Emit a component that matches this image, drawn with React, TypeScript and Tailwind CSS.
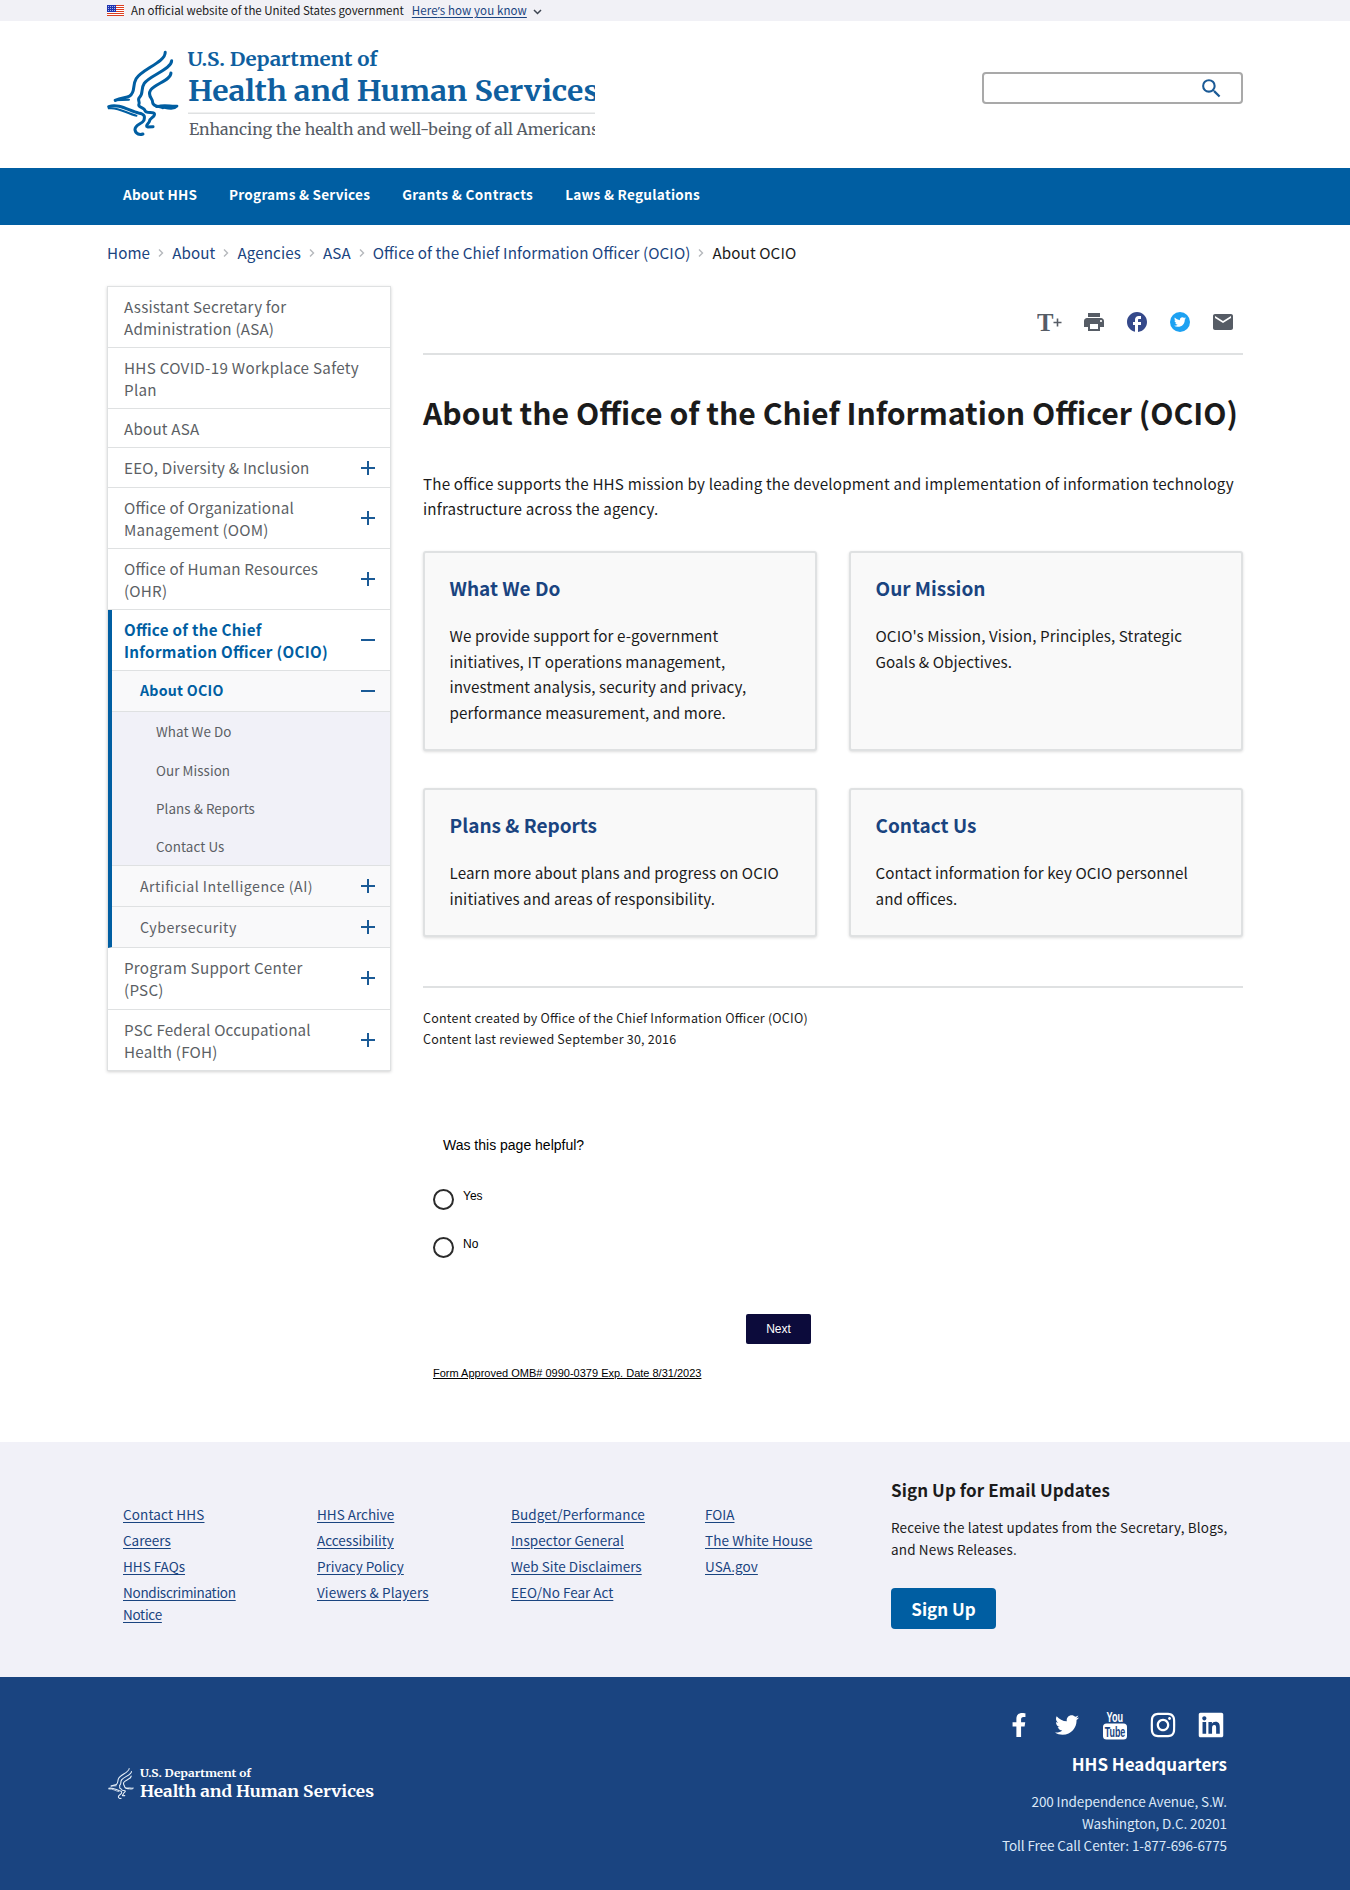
import type { ReactNode } from "react";
import { FaFacebookF, FaInstagram, FaLinkedin, FaTwitter } from "react-icons/fa";
import { MdEmail, MdFacebook, MdPrint, MdSearch } from "react-icons/md";

function Flag() {
  return (
    <svg width="17" height="11" viewBox="0 0 17 11" aria-hidden="true">
      <rect width="17" height="11" fill="#fff" />
      {[0, 2, 4, 6, 8, 10].map((y) => (
        <rect key={y} y={y} width="17" height="1" fill="#db3e1f" />
      ))}
      <rect width="9" height="7" fill="#1e33b1" />
      {[1, 3, 5].map((y) =>
        [1, 3, 5, 7].map((x) => <rect key={`${x}-${y}`} x={x} y={y} width="0.8" height="0.8" fill="#fff" />),
      )}
    </svg>
  );
}

function EaglePaths() {
  return (
    <g fill="none" stroke="currentColor" strokeLinecap="round" strokeLinejoin="round">
      <path strokeWidth="9" d="M221 157 C222 186 152 208 135 236 C123 256 134 276 116 288 C106 295 92 291 73 301" />
      <path strokeWidth="6" d="M73 301 L114 299" />
      <path
        strokeWidth="9"
        d="M240 182 C241 207 176 226 159 250 C147 268 158 281 145 292 C137 300 148 306 143 314 C141 324 160 322 161 332 C164 342 186 334 189 341 C192 350 176 354 175 362 C174 370 160 377 169 381 L185 380"
      />
      <path strokeWidth="9" d="M238 219 C237 242 192 250 178 270 C166 288 186 296 184 308 C186 321 204 318 214 323" />
      <path strokeWidth="8" d="M196 320 C222 311 238 321 256 318 C246 329 230 325 214 322" />
      <path
        strokeWidth="9"
        d="M54 320 C82 309 116 333 142 339 C164 343 160 353 158 361 C152 373 128 375 132 391 C134 403 146 405 155 402"
      />
      <path strokeWidth="6" d="M54 325 C84 320 108 342 136 347" />
    </g>
  );
}

function HeaderLogo() {
  return (
    <svg width="488" height="92" viewBox="107 50 488 92" role="img" aria-label="U.S. Department of Health and Human Services">
      <g className="text-[#005ea2]" transform="translate(90.5 0) scale(0.338 0.3333)">
        <EaglePaths />
      </g>
      <g fill="#0f5f9f" fontFamily="Merriweather, 'DejaVu Serif', serif" fontWeight="700">
        <text x="187.500" y="65.500" fontSize="19.500" textLength="190" lengthAdjust="spacingAndGlyphs">
          U.S. Department of
        </text>
        <text x="188" y="101" fontSize="27.500" textLength="411" lengthAdjust="spacingAndGlyphs">
          Health and Human Services
        </text>
      </g>
      <rect x="188" y="112.500" width="412" height="1.500" fill="#dfe1e2" />
      <text
        x="189"
        y="134.500"
        fontSize="14.800"
        fontFamily="Merriweather, 'DejaVu Serif', serif"
        fill="#565c65"
        textLength="410"
        lengthAdjust="spacingAndGlyphs"
      >
        Enhancing the health and well-being of all Americans
      </text>
    </svg>
  );
}

function FooterLogo() {
  return (
    <svg width="268" height="36" viewBox="107 1765 268 36" role="img" aria-label="U.S. Department of Health and Human Services">
      <g className="text-[#e6eff8]" transform="translate(102.300 1749.500) scale(0.1215 0.1215)">
        <EaglePaths />
      </g>
      <g fill="#fff" fontFamily="Merriweather, 'DejaVu Serif', serif" fontWeight="700">
        <text x="140" y="1776.500" fontSize="11" textLength="111" lengthAdjust="spacingAndGlyphs">
          U.S. Department of
        </text>
        <text x="140" y="1797" fontSize="16" textLength="234" lengthAdjust="spacingAndGlyphs">
          Health and Human Services
        </text>
      </g>
    </svg>
  );
}

const navItems = [
  { label: "About HHS", cls: "tracking-[0.17px]" },
  { label: "Programs & Services", cls: "tracking-[0.22px]" },
  { label: "Grants & Contracts", cls: "tracking-[0.32px]" },
  { label: "Laws & Regulations", cls: "tracking-[0.27px]" },
];

const crumbs = ["Home", "About", "Agencies", "ASA", "Office of the Chief Information Officer (OCIO)"];

function Toggle({ open = false }: { open?: boolean }) {
  return (
    <svg width="14" height="14" viewBox="0 0 14 14" className="shrink-0" aria-hidden="true">
      <path d={open ? "M0 7H14" : "M0 7H14M7 0V14"} stroke="#1a5a96" strokeWidth="2" />
    </svg>
  );
}

function Item({ lines, toggle, cls = "tracking-[0.2px]" }: { lines: string[]; toggle?: boolean; cls?: string }) {
  return (
    <li className="flex items-center justify-between border-b border-[#dfe1e2] py-2 pr-[15px] pl-4">
      <span className={`text-[15.2px] leading-[22.1px] whitespace-nowrap text-[#5c5f65] ${cls}`}>
        {lines.map((l) => (
          <span key={l} className="block">
            {l}
          </span>
        ))}
      </span>
      {toggle && <Toggle />}
    </li>
  );
}

function SubItem({ label }: { label: string }) {
  return (
    <div className="flex h-[41px] items-center justify-between border-t border-[#dfe1e2] bg-[#f9f9fa] pr-[15px] pl-7">
      <span className="text-[14.2px] tracking-[0.46px] text-[#5c5f65]">{label}</span>
      <Toggle />
    </div>
  );
}

function SideNav() {
  return (
    <nav className="w-[284px] shrink-0">
      <ul className="border border-b-0 border-[#dfe1e2] shadow-[0_1px_3px_rgba(0,0,0,0.18)]">
        <Item lines={["Assistant Secretary for", "Administration (ASA)"]} />
        <Item lines={["HHS COVID-19 Workplace Safety", "Plan"]} cls="tracking-[0.29px]" />
        <Item lines={["About ASA"]} />
        <Item lines={["EEO, Diversity & Inclusion"]} toggle />
        <Item lines={["Office of Organizational", "Management (OOM)"]} toggle />
        <Item lines={["Office of Human Resources", "(OHR)"]} toggle />
        <li className="border-b border-l-4 border-b-[#dfe1e2] border-l-[#005ea2]">
          <div className="flex items-center justify-between py-2 pr-[15px] pl-3">
            <span className="text-[15.2px] leading-[22.1px] font-bold tracking-[0.3px] whitespace-nowrap text-[#005ea2]">
              Office of the Chief
              <br />
              Information Officer (OCIO)
            </span>
            <Toggle open />
          </div>
          <div className="flex h-[41px] items-center justify-between border-t border-[#dfe1e2] bg-[#f9f9fa] pr-[15px] pl-7">
            <span className="text-[14.2px] font-bold tracking-[0.24px] text-[#005ea2]">About OCIO</span>
            <Toggle open />
          </div>
          <ul className="border-t border-[#dfe1e2] bg-[#f1f1f8]">
            {["What We Do", "Our Mission", "Plans & Reports", "Contact Us"].map((t) => (
              <li key={t} className="flex h-[38.3px] items-center pl-11 text-[13.4px] tracking-[0.07px] text-[#5c5f65]">
                {t}
              </li>
            ))}
          </ul>
          <SubItem label="Artificial Intelligence (AI)" />
          <SubItem label="Cybersecurity" />
        </li>
        <Item lines={["Program Support Center", "(PSC)"]} toggle cls="tracking-[0.25px]" />
        <Item lines={["PSC Federal Occupational", "Health (FOH)"]} toggle />
      </ul>
    </nav>
  );
}

function ShareBar() {
  return (
    <div className="flex h-[69px] items-center justify-end border-b-2 border-[#dfe1e2] pt-[5px] pr-2">
      <svg width="25" height="24" viewBox="0 0 25 24" aria-label="Text resize" className="mr-5">
        <text x="0" y="20.500" fontSize="24.500" fontWeight="700" fontFamily="'Liberation Serif', serif" fill="#565c65" textLength="16.500" lengthAdjust="spacingAndGlyphs">
          T
        </text>
        <path d="M16.500 12.500h8M20.500 8.500v8" stroke="#565c65" strokeWidth="1.600" />
      </svg>
      <MdPrint size={24} className="mr-[19px] text-[#565c65]" />
      <MdFacebook size={24} className="mr-[19px] text-[#35498a]" />
      <span className="mr-[19px] flex h-6 w-6 items-center justify-center">
        <span className="flex h-5 w-5 items-center justify-center rounded-full bg-[#1da1f2]">
          <FaTwitter size={12} className="text-white" />
        </span>
      </span>
      <MdEmail size={24} className="text-[#565c65]" />
    </div>
  );
}

function Card({ title, children }: { title: string; children: ReactNode }) {
  return (
    <div className="rounded-[3px] border-2 border-[#dfe1e2] bg-[#f9f9f9] px-[24.5px] pt-[22px] pb-[24px] shadow-[0_1px_3px_rgba(0,0,0,0.14)]">
      <h2 className="text-[19px] leading-[26px] font-bold whitespace-nowrap text-[#1a4480]">{title}</h2>
      <p className="mt-[22px] text-[15.2px] leading-[25.44px] tracking-[0.09px] whitespace-nowrap text-[#1b1b1b]">{children}</p>
    </div>
  );
}

function Radio({ label }: { label: string }) {
  return (
    <label className="mb-[27px] flex h-[21px] items-center pl-[10px] text-[12px] text-black">
      <span className="h-[21px] w-[21px] rounded-full border-2 border-[#2b2b2b]" />
      <span className="ml-[9px] pb-[7px] leading-[14px]">{label}</span>
    </label>
  );
}

function Main() {
  return (
    <main className="w-[820px]">
      <ShareBar />
      <h1 className="mt-[37px] text-[30.2px] leading-[40px] font-bold whitespace-nowrap text-[#1b1b1b]">
        About the Office of the Chief Information Officer (OCIO)
      </h1>
      <p className="mt-[39px] text-[15.2px] leading-[25.44px] tracking-[0.174px] whitespace-nowrap text-[#1b1b1b]">
        The office supports the HHS mission by leading the development and implementation of information technology
        <br />
        infrastructure across the agency.
      </p>
      <div className="mt-[29.5px] grid grid-cols-2 gap-x-8 gap-y-[37px]">
        <Card title="What We Do">
          We provide support for e-government
          <br />
          initiatives, IT operations management,
          <br />
          investment analysis, security and privacy,
          <br />
          performance measurement, and more.
        </Card>
        <Card title="Our Mission">
          OCIO's Mission, Vision, Principles, Strategic
          <br />
          Goals &amp; Objectives.
        </Card>
        <Card title="Plans & Reports">
          Learn more about plans and progress on OCIO
          <br />
          initiatives and areas of responsibility.
        </Card>
        <Card title="Contact Us">
          Contact information for key OCIO personnel
          <br />
          and offices.
        </Card>
      </div>
      <div className="mt-[49px] border-t-2 border-[#dfe1e2] pt-[19px] text-[12.5px] leading-[21px] tracking-[0.22px] text-[#1b1b1b]">
        <p>Content created by Office of the Chief Information Officer (OCIO)</p>
        <p>Content last reviewed September 30, 2016</p>
      </div>
      <form className="mt-[86px] w-[388px] font-['Liberation_Sans',sans-serif]">
        <p className="pl-5 text-[14px] leading-5 text-black">Was this page helpful?</p>
        <div className="mt-[33.5px]">
          <Radio label="Yes" />
          <Radio label="No" />
        </div>
        <div className="mt-[56.5px] flex justify-end">
          <button type="button" className="h-[30px] w-[65px] rounded-[2px] bg-[#0c0b3b] text-[12px] text-white">
            Next
          </button>
        </div>
        <p className="mt-[21px] pl-[10px] text-[11px] leading-4 whitespace-nowrap text-black underline">
          Form Approved OMB# 0990-0379 Exp. Date 8/31/2023
        </p>
      </form>
    </main>
  );
}

const footerCols: { label: ReactNode; key: string; cls: string }[][] = [
  [
    { key: "contact", label: "Contact HHS", cls: "tracking-[0.14px]" },
    { key: "careers", label: "Careers", cls: "" },
    { key: "faq", label: "HHS FAQs", cls: "" },
    {
      key: "nondisc",
      label: (
        <>
          Nondiscrimination
          <br />
          Notice
        </>
      ),
      cls: "tracking-[-0.28px]",
    },
  ],
  [
    { key: "archive", label: "HHS Archive", cls: "" },
    { key: "access", label: "Accessibility", cls: "" },
    { key: "privacy", label: "Privacy Policy", cls: "" },
    { key: "viewers", label: "Viewers & Players", cls: "tracking-[0.1px]" },
  ],
  [
    { key: "budget", label: "Budget/Performance", cls: "tracking-[0.13px]" },
    { key: "ig", label: "Inspector General", cls: "tracking-[0.1px]" },
    { key: "web", label: "Web Site Disclaimers", cls: "" },
    { key: "eeo", label: "EEO/No Fear Act", cls: "" },
  ],
  [
    { key: "foia", label: "FOIA", cls: "" },
    { key: "wh", label: "The White House", cls: "tracking-[0.1px]" },
    { key: "usa", label: "USA.gov", cls: "tracking-[0.1px]" },
  ],
];

function YouTubeIcon() {
  return (
    <svg width="24" height="30" viewBox="0 0 24 30" aria-label="YouTube">
      <text x="3.500" y="11.500" fontSize="14" fontWeight="700" fontFamily="'Liberation Sans', sans-serif" fill="#fff" textLength="16.500" lengthAdjust="spacingAndGlyphs">
        You
      </text>
      <rect x="0" y="13.500" width="24" height="16" rx="3.500" fill="#fff" />
      <text x="1.800" y="27" fontSize="14" fontWeight="700" fontFamily="'Liberation Sans', sans-serif" fill="#1a4480" textLength="20.500" lengthAdjust="spacingAndGlyphs">
        Tube
      </text>
    </svg>
  );
}

export default function App() {
  return (
    <div className="h-[1890px] w-[1350px] overflow-hidden bg-white font-['Noto_Sans_CJK_SC',sans-serif] [font-feature-settings:'liga'_1]">
      <div className="flex h-[21px] items-center bg-[#f1f1f6] pl-[107px] text-[11.5px] leading-[21px] text-[#1b1b1b]">
        <Flag />
        <span className="ml-[7px] whitespace-nowrap">An official website of the United States government</span>
        <a className="ml-2 tracking-[0.1px] whitespace-nowrap text-[#1a4480] underline underline-offset-2">
          Here<span className="font-['Noto_Sans',sans-serif]">’</span>s how you know
        </a>
        <svg width="9" height="6" viewBox="0 0 9 6" className="mt-[3px] ml-[6px]" aria-hidden="true">
          <path d="M1 1L4.500 4.500L8 1" fill="none" stroke="#3d4551" strokeWidth="1.500" />
        </svg>
      </div>

      <header className="flex h-[147px] items-start justify-between pr-[107px] pl-[107px]">
        <div className="mt-[29px]">
          <HeaderLogo />
        </div>
        <div className="mt-[51px] flex h-8 w-[261px] items-center justify-end rounded-[4px] border-2 border-[#a9a9a9] pr-[17px]">
          <MdSearch size={25} className="text-[#1a5a96]" />
        </div>
      </header>

      <nav className="flex h-[57px] bg-[#005ea2] pl-[123px] text-[13.6px] leading-[52px] font-bold text-white">
        {navItems.map((n) => (
          <a key={n.label} className={`mr-8 whitespace-nowrap ${n.cls}`}>
            {n.label}
          </a>
        ))}
      </nav>

      <div className="flex h-[55px] items-center pl-[107px] text-[15.2px] tracking-[0.1px] text-[#1a4480]">
        {crumbs.map((c) => (
          <span key={c} className="flex items-center whitespace-nowrap">
            {c}
            <svg width="6" height="8" viewBox="0 0 6 8" className="mx-[8px] mt-[2px]" aria-hidden="true">
              <path d="M1 0.500L4.500 4L1 7.500" fill="none" stroke="#b5b8bc" strokeWidth="1.400" />
            </svg>
          </span>
        ))}
        <span className="text-[#1b1b1b]">About OCIO</span>
      </div>

      <div className="flex h-[1162px] items-start gap-8 pt-[6px] pl-[107px]">
        <SideNav />
        <Main />
      </div>

      <footer>
        <div className="flex h-[235px] bg-[#f1f1f8] pl-[123px] text-[13.5px] leading-[22px]">
          <div className="flex w-[768px] pt-[61px]">
            {footerCols.map((col, i) => (
              <ul key={i} className="w-[194px] shrink-0">
                {col.map((l) => (
                  <li key={l.key} className={`mb-1 whitespace-nowrap text-[#1a4480] underline underline-offset-2 ${l.cls}`}>
                    {l.label}
                  </li>
                ))}
              </ul>
            ))}
          </div>
          <div className="pt-9 text-[#1b1b1b]">
            <h3 className="text-[17px] leading-6 font-bold tracking-[0.08px]">Sign Up for Email Updates</h3>
            <p className="mt-[14px] tracking-[0.15px] whitespace-nowrap">
              Receive the latest updates from the Secretary, Blogs,
              <br />
              and News Releases.
            </p>
            <button type="button" className="mt-7 block h-[41px] w-[105px] rounded-[4px] bg-[#005ea2] text-[17px] leading-[40px] font-bold text-white">
              Sign Up
            </button>
          </div>
        </div>
        <div className="flex h-[213px] justify-between bg-[#1a4480] pr-[123px] pl-[107px] text-white">
          <div className="mt-[88px]">
            <FooterLogo />
          </div>
          <div className="pt-9 text-right">
            <div className="flex h-6 items-center justify-end pr-1">
              <FaFacebookF size={24} />
              <FaTwitter size={24} className="ml-6" />
              <span className="ml-6">
                <YouTubeIcon />
              </span>
              <FaInstagram size={28} className="mr-[-2px] ml-[22px]" />
              <FaLinkedin size={28} className="mr-[-2px] ml-[22px]" />
            </div>
            <h3 className="mt-[15px] text-[17px] leading-6 font-bold">HHS Headquarters</h3>
            <p className="mt-[14px] text-[13.5px] leading-[22px] tracking-[-0.1px] text-[#dbe8f8]">
              200 Independence Avenue, S.W.
              <br />
              Washington, D.C. 20201
              <br />
              Toll Free Call Center: 1-877-696-6775
            </p>
          </div>
        </div>
      </footer>
    </div>
  );
}
